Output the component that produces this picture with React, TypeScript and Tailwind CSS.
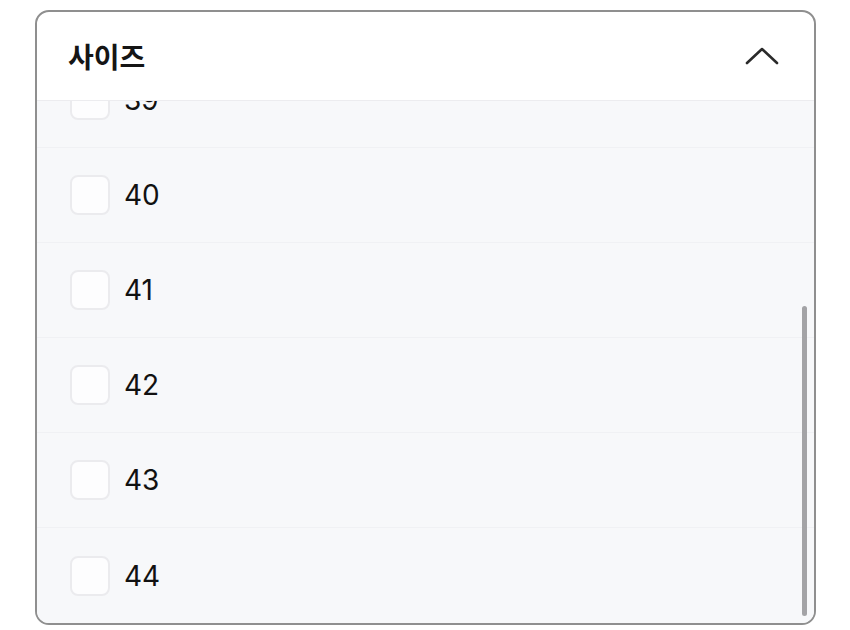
import { useState } from "react";

// only the tail of the list is visible; the list is scrolled to the bottom
const SIZES = ["39", "40", "41", "42", "43", "44"];

function ChevronUp() {
  return (
    <svg width="34" height="20" viewBox="0 0 34 20" fill="none" aria-hidden>
      <path
        d="M2 17 L17 3 L32 17"
        stroke="#2b2b2b"
        strokeWidth="2.6"
        strokeLinecap="round"
        strokeLinejoin="round"
      />
    </svg>
  );
}

function SizeRow({ label, last }: { label: string; last: boolean }) {
  const [checked, setChecked] = useState(false);
  return (
    <label
      className={`flex h-[95px] shrink-0 cursor-pointer items-center gap-[14px] px-[33px] ${
        last ? "" : "border-b border-[#f0f1f4]"
      }`}
    >
      <input
        type="checkbox"
        checked={checked}
        onChange={() => setChecked(!checked)}
        className="sr-only"
      />
      <span className="h-[40px] w-[40px] rounded-[8px] border-2 border-[#ebebee] bg-[#fdfdfe]" />
      <span className="text-[28px] leading-none text-[#111]">{label}</span>
    </label>
  );
}

export default function App() {
  const [open, setOpen] = useState(true);
  return (
    <div className="min-h-screen bg-white pl-[35px] pt-[10px] font-['Inter','Noto_Sans_CJK_KR',sans-serif]">
      <div className="flex h-[615px] w-[781px] flex-col overflow-hidden rounded-[14px] border-2 border-[#8f8f8f] bg-white">
        <button
          onClick={() => setOpen(!open)}
          className="flex h-[89px] shrink-0 items-center justify-between border-b border-[#ececef] pl-[31px] pr-[35px]"
        >
          <span className="font-['Noto_Sans_CJK_KR',sans-serif] text-[28px] font-semibold text-[#151515]">
            사이즈
          </span>
          <ChevronUp />
        </button>
        {open && (
          <div className="relative flex min-h-0 flex-1 flex-col justify-end overflow-hidden bg-[#f7f8fa]">
            {SIZES.map((s, i) => (
              <SizeRow key={s} label={s} last={i === SIZES.length - 1} />
            ))}
            <div className="absolute bottom-[7px] right-[7px] h-[310px] w-[5px] rounded-full bg-[#a3a3a6]" />
          </div>
        )}
      </div>
    </div>
  );
}
